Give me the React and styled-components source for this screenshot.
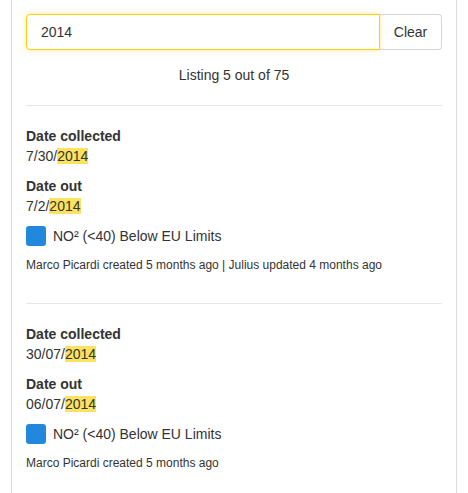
import React from "react";
import styled, { createGlobalStyle } from "styled-components";

const Global = createGlobalStyle`
  html, body { margin: 0; padding: 0; background: #fff; }
  body {
    font-family: "Liberation Sans", Arial, Helvetica, sans-serif;
    color: #333;
    font-size: 14px;
    line-height: 20px;
  }
`;

const Panel = styled.div`
  margin: 0 11px;
  min-height: 493px;
  box-sizing: border-box;
  border-left: 1px solid #ddd;
  border-right: 1px solid #ddd;
  padding: 14px 14px 0;
`;

const SearchGroup = styled.div`
  display: flex;
  height: 36px;
`;

const SearchInput = styled.input`
  flex: 1;
  min-width: 0;
  box-sizing: border-box;
  height: 36px;
  border: 1px solid #f5d21a;
  border-radius: 4px 0 0 4px;
  box-shadow: 0 0 5px rgba(250, 215, 30, 0.55);
  padding: 0 14px;
  font: inherit;
  font-size: 14px;
  color: #333;
  outline: none;
  position: relative;
  z-index: 1;
`;

const ClearButton = styled.button`
  width: 62px;
  box-sizing: border-box;
  height: 36px;
  border: 1px solid #d6d6d6;
  border-left: none;
  border-radius: 0 4px 4px 0;
  background: #fff;
  font: inherit;
  font-size: 14px;
  color: #333;
  padding: 0;
`;

const Listing = styled.div`
  margin-top: 15px;
  text-align: center;
  line-height: 20px;
`;

const Divider = styled.hr`
  border: none;
  border-top: 1px solid #e6e6e6;
  margin: ${(p) => (p.$first ? "20px" : "0")} 0 0;
  height: 0;
`;

const Item = styled.div`
  padding: 20px 0 29px;
`;

const Field = styled.div`
  & + & {
    margin-top: 10px;
  }
`;

const Label = styled.div`
  font-weight: bold;
`;

const Value = styled.div``;

const Mark = styled.mark`
  background: #fbe25f;
  color: #333;
`;

const Legend = styled.div`
  display: flex;
  align-items: center;
  gap: 7px;
  margin-top: 10px;
  height: 20px;
`;

const Swatch = styled.span`
  width: 20px;
  height: 20px;
  border-radius: 3px;
  background: ${(p) => p.$color};
  flex: none;
`;

const Meta = styled.div`
  margin-top: 11px;
  font-size: 12px;
  line-height: 17px;
  color: #333;
`;

function Highlighted({ text, term }) {
  const i = text.indexOf(term);
  if (i < 0) return text;
  return (
    <>
      {text.slice(0, i)}
      <Mark>{term}</Mark>
      {text.slice(i + term.length)}
    </>
  );
}

const items = [
  {
    collected: "7/30/2014",
    out: "7/2/2014",
    meta: "Marco Picardi created 5 months ago | Julius updated 4 months ago",
  },
  {
    collected: "30/07/2014",
    out: "06/07/2014",
    meta: "Marco Picardi created 5 months ago",
  },
];

export default function App() {
  const term = "2014";
  return (
    <>
      <Global />
      <Panel>
        <SearchGroup>
          <SearchInput defaultValue={term} />
          <ClearButton>Clear</ClearButton>
        </SearchGroup>
        <Listing>Listing 5 out of 75</Listing>
        {items.map((it, idx) => (
          <React.Fragment key={idx}>
            <Divider $first={idx === 0} />
            <Item>
              <Field>
                <Label>Date collected</Label>
                <Value>
                  <Highlighted text={it.collected} term={term} />
                </Value>
              </Field>
              <Field>
                <Label>Date out</Label>
                <Value>
                  <Highlighted text={it.out} term={term} />
                </Value>
              </Field>
              <Legend>
                <Swatch $color="#2188dc" />
                <span>NO² (&lt;40) Below EU Limits</span>
              </Legend>
              <Meta>{it.meta}</Meta>
            </Item>
          </React.Fragment>
        ))}
      </Panel>
    </>
  );
}
